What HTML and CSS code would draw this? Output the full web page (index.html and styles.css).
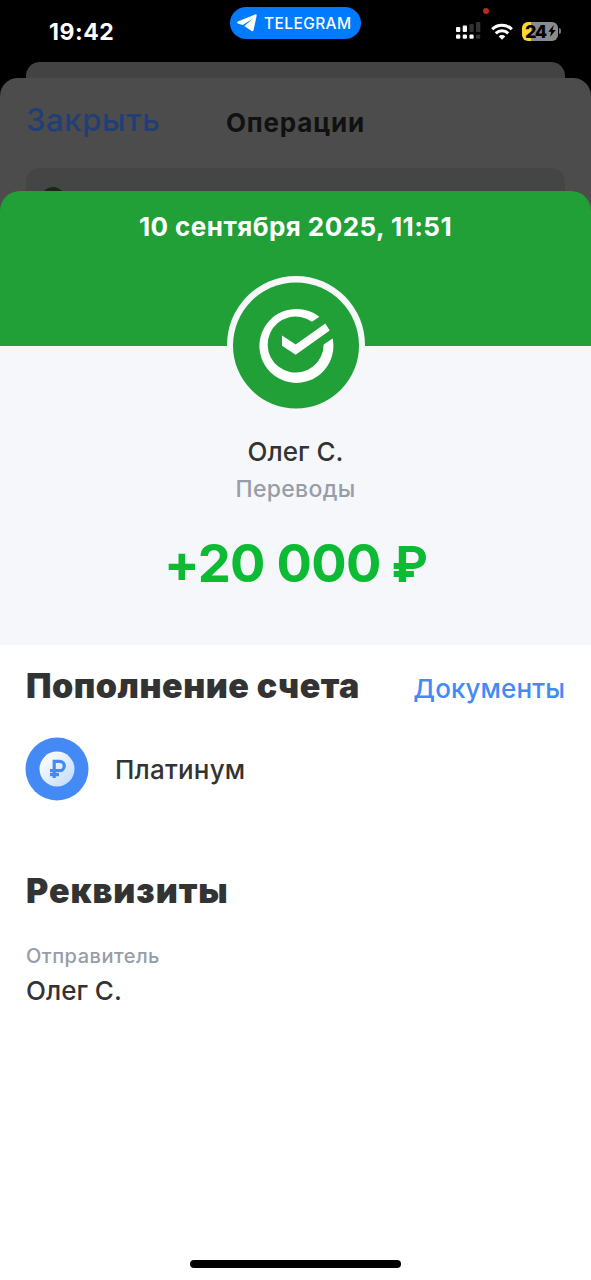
FILE: index.html
```html
<!DOCTYPE html>
<html lang="ru">
<head>
<meta charset="utf-8">
<title>Операция</title>
<link rel="stylesheet" href="styles.css">
</head>
<body>
<div class="screen">
  <header class="status">
    <span class="time">19:42</span>
    <div class="pill">
      <svg class="plane" viewBox="0 0 20 18"><path d="M.8 7.600 18.100.4c1-.4 1.800.2 1.500 1.600l-3 14c-.3 1.200-1.100 1.500-2 .9l-7.300-5 8.900-7.300-10.500 6.500L.9 9.400C-.2 9-.2 8 .8 7.600z" fill="#fff"/></svg>
      <span class="pill-text">TELEGRAM</span>
    </div>
    <div class="indicators">
      <svg class="cell" viewBox="0 0 26 20">
        <g fill="#fff"><rect x="0" y="6" width="4.300" height="5" rx="1"/><rect x="6.700" y="4.500" width="4.300" height="6.500" rx="1"/><rect x="0" y="13.500" width="4.300" height="4.300" rx="1.300"/><rect x="6.700" y="13.500" width="4.300" height="4.300" rx="1.300"/><rect x="13.400" y="13.500" width="4.300" height="4.300" rx="1.300"/></g>
        <g fill="#333"><rect x="13.400" y="3" width="4.300" height="8" rx="1"/><rect x="20" y="1" width="4.300" height="10" rx="1"/><rect x="20" y="13.500" width="4.300" height="4.300" rx="1.300"/></g>
      </svg>
      <svg class="wifi" viewBox="0 0 22 17" fill="none" stroke="#fff" stroke-width="3"><path d="M1.200 6.200a14 14 0 0 1 19.600 0M4.800 10.300a8.900 8.900 0 0 1 12.400 0"/><path d="M11 16.800 7.700 13.400a4.700 4.700 0 0 1 6.600 0z" fill="#fff" stroke="none"/></svg>
      <div class="battery"><span class="level">24</span><svg class="bolt" viewBox="0 0 8 12"><path d="M5.800 0 .3 6.700h3L2 12l5.700-7H4.600z"/></svg></div>
      <i class="nub"></i>
    </div>
    <i class="mic-dot"></i>
  </header>

  <div class="back-card"></div>
  <section class="history">
    <div class="nav"><span class="close">Закрыть</span><span class="nav-title">Операции</span></div>
    <div class="search"><i class="lens"></i></div>
  </section>

  <main class="sheet">
    <div class="banner">10 сентября 2025, 11:51</div>
    <div class="summary">
      <svg class="logo" viewBox="35 34.500 414 414">
        <circle cx="242" cy="241.500" r="207" fill="#f5f7fa"/>
        <circle cx="242" cy="243" r="189" fill="#21a038"/>
        <path d="M312 157A111 111 0 1 0 352 222L325 240A84 84 0 1 1 290 172Z" fill="#fff"/>
        <path d="M200 213 241 240 330 177 343 198 241 271 200 244Z" fill="#fff"/>
      </svg>
      <div class="name">Олег С.</div>
      <div class="category">Переводы</div>
      <div class="amount">+20 000 <span class="ruble">₽</span></div>
    </div>
    <div class="details">
      <div class="heading-row"><h2 class="heading">Пополнение счета</h2><a class="docs">Документы</a></div>
      <div class="account">
        <svg class="coin" viewBox="0 0 64 64">
          <defs><linearGradient id="g" x1="0" y1="0" x2="1" y2="1"><stop offset=".1" stop-color="#fff"/><stop offset="1" stop-color="#bcd8fc"/></linearGradient></defs>
          <circle cx="32" cy="32" r="31.500" fill="#448af7"/><circle cx="32" cy="32" r="17.500" fill="url(#g)"/>
          <path d="M29.200 41V24.300h5.400a4.700 4.700 0 0 1 0 9.400H25M25 37.600h9" fill="none" stroke="#448af7" stroke-width="3.200"/>
        </svg>
        <span class="account-name">Платинум</span>
      </div>
      <h2 class="heading req">Реквизиты</h2>
      <div class="label">Отправитель</div>
      <div class="value">Олег С.</div>
    </div>
    <div class="home-area"><div class="home"></div></div>
  </main>
</div>
</body>
</html>
```
FILE: styles.css
```css
* { box-sizing: border-box; }
body { margin: 0; background: #000; font-family: Inter, "Liberation Sans", sans-serif; }
.screen { width: 591px; height: 1280px; display: flex; flex-direction: column; overflow: hidden; background: #000; }
.status { position: relative; height: 62px; flex: none; display: grid; grid-template-columns: 229px 132px 1fr; align-items: start; color: #fff; }
.time { padding: 18px 0 0 49px; font-size: 23px; line-height: 28px; font-weight: 700; letter-spacing: .55px; }
.pill { margin: 7px 0 0 1px; height: 32px; border-radius: 16px; background: #007aff; display: flex; align-items: center; padding-left: 7px; gap: 7px; }
.plane { width: 20px; height: 18px; }
.pill-text { font-size: 15.5px; font-weight: 500; letter-spacing: .4px; }
.indicators { display: flex; align-items: center; height: 22px; margin-top: 20px; padding-left: 95px; }
.cell { width: 26px; height: 20px; }
.wifi { width: 22px; height: 17px; margin-left: 9px; }
.battery { margin-left: 9px; width: 36px; height: 19px; border-radius: 6px; background: linear-gradient(90deg, #fcd72f 9px, #8b8b8b 9px); display: flex; align-items: center; color: #000; padding-left: 3px; }
.level { font-size: 18px; line-height: 19px; font-weight: 800; letter-spacing: -1.5px; }
.bolt { width: 8px; height: 12px; margin-left: 2px; }
.nub { width: 2px; height: 6px; margin-left: 1px; border-radius: 0 2px 2px 0; background: #777; }
.mic-dot { position: absolute; left: 483px; top: 8px; width: 6px; height: 6px; border-radius: 50%; background: #b9291f; }
.back-card { flex: none; height: 36px; margin: 0 26px -20px; border-radius: 14px 14px 0 0; background: #434343; }
.history { flex: none; height: 133px; padding: 23px 26px 0; border-radius: 18px 18px 0 0; background: #4c4c4c; }
.nav { display: grid; grid-template-columns: 1fr auto 1fr; height: 67px; align-items: start; }
.close { font-size: 31px; line-height: 38px; color: #213f75; font-weight: 500; letter-spacing: .65px; }
.nav-title { font-size: 26px; line-height: 43px; font-weight: 700; letter-spacing: .8px; color: #111; }
.search { height: 43px; border-radius: 14px 14px 0 0; background: #454545; padding: 19px 0 0 15px; }
.lens { display: block; width: 24px; height: 24px; border-radius: 50%; background: #192719; }
.sheet { margin-top: -20px; flex: 1; display: flex; flex-direction: column; }
.banner { flex: none; height: 155px; border-radius: 20px 20px 0 0; background: #21a038; color: #fff; text-align: center; font-size: 26px; font-weight: 650; letter-spacing: .45px; line-height: 32px; padding-top: 20px; }
.summary { flex: none; height: 299px; background: #f5f7fa; display: flex; flex-direction: column; align-items: center; }
.logo { flex: none; width: 138px; height: 138px; margin-top: -70px; }
.name { margin-top: 22px; font-size: 26px; line-height: 32px; font-weight: 550; color: #333; }
.category { margin-top: 7px; font-size: 23px; line-height: 28px; font-weight: 550; letter-spacing: .3px; color: #979da8; }
.amount { margin-top: 28px; font-size: 52.5px; line-height: 64px; font-weight: 650; letter-spacing: -.7px; color: #0cba33; }
.ruble { font-size: 49px; line-height: 1; margin-left: -1px; }
.details { padding: 0 26px; flex: 1; color: #333; background: #fff; }
.heading-row { display: flex; justify-content: space-between; align-items: baseline; padding-top: 21px; }
.heading { margin: 0; font-size: 34px; line-height: 40px; font-weight: 900; letter-spacing: .5px; }
.req.heading { margin-top: 70px; letter-spacing: .95px; }
.docs { font-size: 26px; line-height: 32px; font-weight: 500; letter-spacing: .1px; color: #448af7; }
.account { display: flex; align-items: center; gap: 26px; margin: 31px 0 0 -1px; }
.coin { width: 64px; height: 64px; }
.account-name { padding-top: 2px; font-size: 26px; line-height: 32px; font-weight: 500; letter-spacing: .2px; }
.label { margin-top: 33px; font-size: 20px; line-height: 24px; font-weight: 550; letter-spacing: .5px; color: #979da8; }
.value { margin-top: 7px; font-size: 26px; line-height: 32px; font-weight: 500; }
.home-area { flex: none; height: 20px; background: #fff; }
.home { width: 211px; height: 8px; margin: 0 auto; border-radius: 4px; background: #000; }
```
